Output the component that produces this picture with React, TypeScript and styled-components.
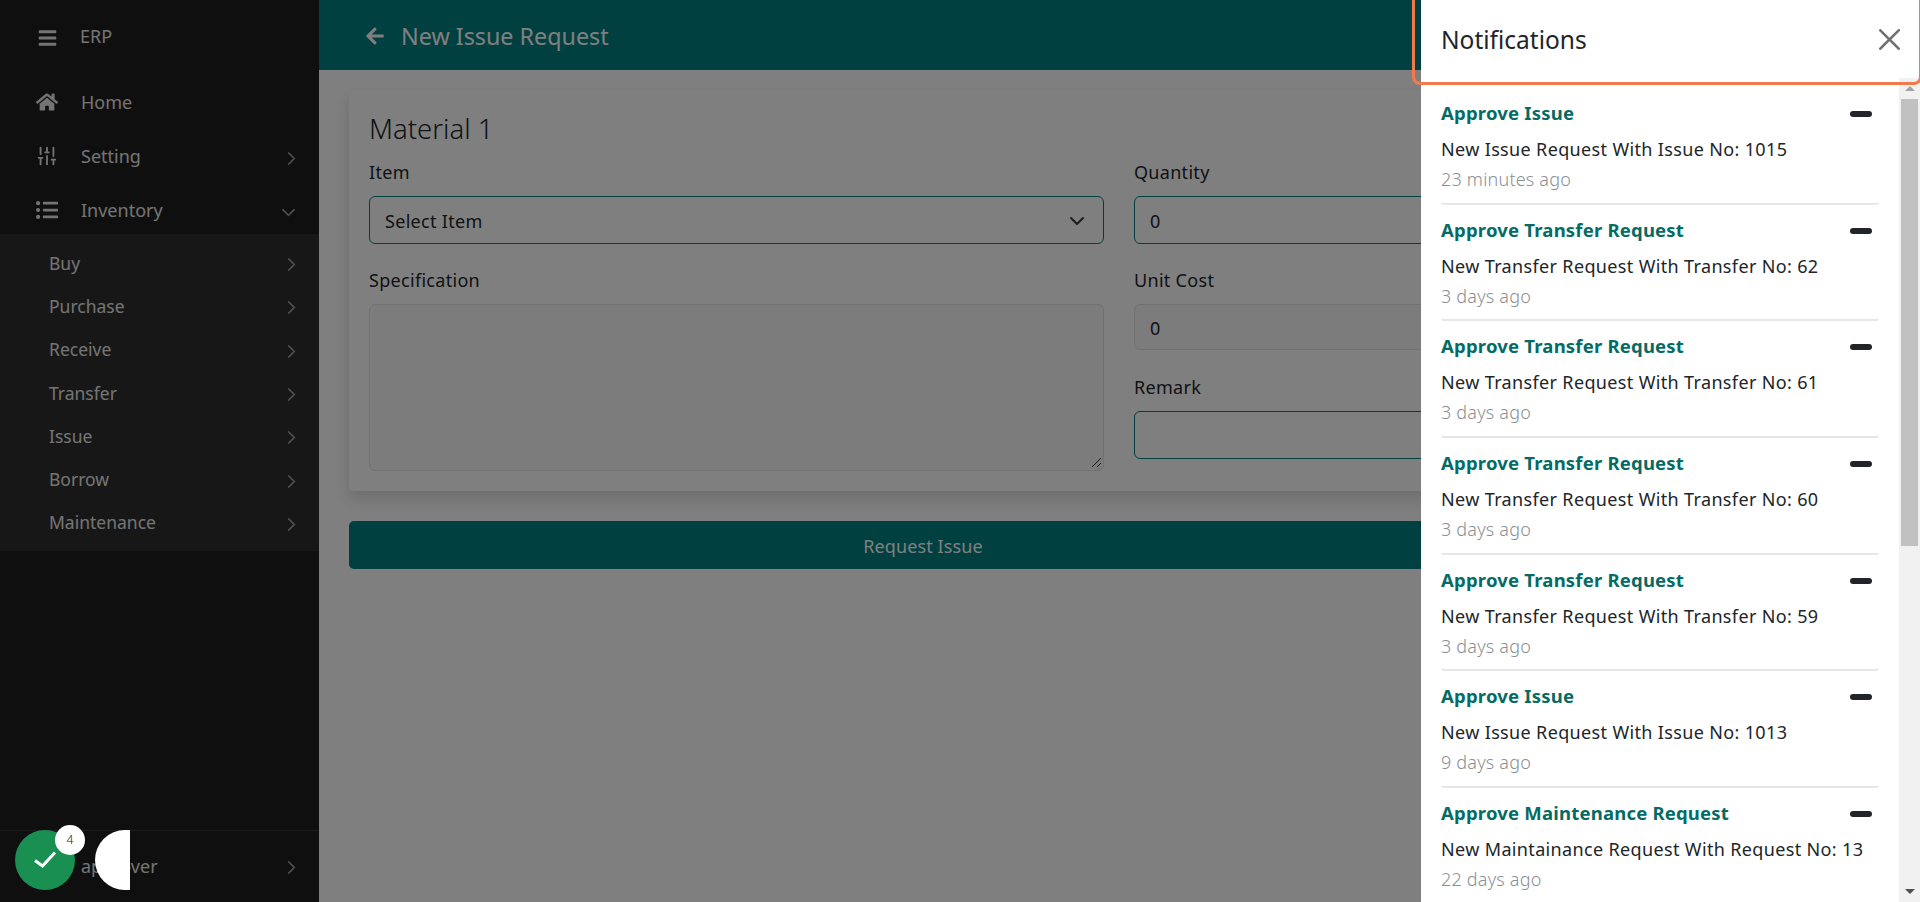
import React from "react";
import styled, { createGlobalStyle } from "styled-components";
import { FaBars, FaHome, FaListUl, FaArrowLeft } from "react-icons/fa";
import { BsChevronRight, BsChevronDown } from "react-icons/bs";
import { SlidersVertical } from "lucide-react";

const Global = createGlobalStyle`
  html, body { margin: 0; padding: 0; height: 100%; overflow: hidden; }
  body { font-family: "Noto Sans", "Open Sans", sans-serif; background: #fff; color: #212529; }
  * { box-sizing: border-box; }
`;

const Page = styled.div`
  display: flex;
  width: 1920px;
  height: 902px;
  overflow: hidden;
`;
const Sidebar = styled.aside`
  width: 319px;
  flex: none;
  display: flex;
  flex-direction: column;
  background: #1f1f1f;
  color: #e8e8e8;
`;
const Brand = styled.div`
  display: flex;
  align-items: center;
  height: 72px;
  padding-left: 38px;
  gap: 23px;
  font-size: 18px;
  svg { width: 19px; height: 20px; margin-top: 3px; }
`;
const Menu = styled.nav`
  flex: 1;
  padding-top: 3px;
`;
const MenuRow = styled.div`
  display: flex;
  align-items: center;
  height: 54px;
  padding: 0 20px 0 36px;
  font-size: 18px;
`;
const MenuIcon = styled.span`
  width: 45px;
  display: flex;
  svg { width: 22px; height: 22px; }
`;
const MenuLabel = styled.span`
  flex: 1;
`;
const Chevron = styled.span<{ $down?: boolean }>`
  display: flex;
  color: #a8a8a8;
  margin-top: 4px;
  margin-right: ${(p) => (p.$down ? 3 : 0)}px;
  svg { width: 15px; height: 15px; stroke: currentColor; stroke-width: 0.8px; }
`;
const SubMenu = styled.div`
  background: #2e2e2e;
  margin-top: -3px;
  padding: 7px 0;
  height: 317px;
`;
const SubRow = styled.div`
  display: flex;
  align-items: center;
  height: 43.3px;
  padding: 0 20px 0 49px;
  font-size: 17.5px;
`;
const SideFooter = styled.div`
  height: 72px;
  border-top: 1px solid #3a3a3a;
  display: flex;
  align-items: center;
  padding: 0 20px 2px 81px;
  font-size: 18px;
`;
const Main = styled.main`
  flex: 1;
  min-width: 0;
  display: flex;
  flex-direction: column;
  background: #fff;
`;
const TopBar = styled.header`
  height: 70px;
  background: #008080;
  color: #fff;
  display: flex;
  align-items: center;
  padding: 1px 0 0 46px;
  gap: 16px;
  font-size: 23.3px;
  svg { width: 20px; height: 20px; }
`;
const Content = styled.div`
  padding: 20px 30px;
  width: 1208px;
`;
const Card = styled.section`
  background: #fff;
  padding: 20px;
  height: 401px;
  box-shadow: 0 8px 16px rgba(0, 0, 0, 0.15);
  border-radius: 4px;
`;
const CardTitle = styled.h3`
  margin: 0 0 12px;
  font-size: 27.5px;
  font-weight: 300;
  line-height: 38px;
`;
const FormGrid = styled.div`
  display: grid;
  grid-template-columns: 735px 1fr;
  column-gap: 30px;
`;
const Column = styled.div`
  display: flex;
  flex-direction: column;
`;
const Label = styled.div<{ $top: number }>`
  font-size: 18px;
  letter-spacing: 0.3px;
  line-height: 24px;
  height: 26px;
  margin-top: ${(p) => p.$top}px;
  margin-bottom: 10px;
`;
const Field = styled.div<{ $active?: boolean; $h: number }>`
  height: ${(p) => p.$h}px;
  border: 1px solid ${(p) => (p.$active ? "#008080" : "#dee2e6")};
  border-radius: 6px;
  background: ${(p) => (p.$active ? "#fff" : "#f8f9fa")};
  display: flex;
  align-items: center;
  justify-content: space-between;
  padding: 1px 18px 0 15px;
  font-size: 18px;
  letter-spacing: 0.3px;
  position: relative;
`;
const Grip = styled.svg`
  position: absolute;
  right: 1px;
  bottom: 2px;
`;
const SubmitButton = styled.button`
  display: block;
  width: 100%;
  height: 48px;
  margin-top: 30px;
  padding: 1px 0 0;
  background: #008080;
  color: #fff;
  border: 0;
  border-radius: 5px;
  font: inherit;
  font-size: 18px;
  letter-spacing: 0.1px;
`;
const Backdrop = styled.div`
  position: fixed;
  inset: 0;
  background: rgba(0, 0, 0, 0.5);
`;
const Drawer = styled.aside`
  position: fixed;
  top: 0;
  right: 0;
  bottom: 0;
  width: 499px;
  background: #fff;
  display: flex;
  flex-direction: column;
`;
const DrawerHead = styled.div`
  height: 78px;
  flex: none;
  display: flex;
  align-items: center;
  justify-content: space-between;
  padding: 0 20px;
  font-size: 24.5px;
`;
const FocusRing = styled.div`
  position: absolute;
  left: -9px;
  right: -2px;
  top: -10px;
  height: 95px;
  border: 3px solid #f07a4b;
  border-radius: 8px;
  pointer-events: none;
`;
const DrawerBody = styled.div`
  flex: 1;
  min-height: 0;
  display: flex;
`;
const List = styled.div`
  flex: 1;
  overflow: hidden;
  padding: 10px 20px 0;
`;
const Note = styled.div`
  height: 116.7px;
  padding-top: 11px;
  border-bottom: 2px solid #e6e6e6;
  border-radius: 3px;
  &:last-child { border-bottom: 0; }
`;
const NoteHead = styled.div`
  display: flex;
  align-items: center;
  justify-content: space-between;
  height: 30px;
  padding-right: 7px;
`;
const NoteTitle = styled.div`
  font-size: 18.5px;
  letter-spacing: 0.2px;
  line-height: 28px;
  margin-bottom: 2px;
  font-weight: 700;
  color: #056b64;
`;
const Dash = styled.span`
  width: 22px;
  height: 6px;
  border-radius: 3px;
  background: #212529;
`;
const NoteText = styled.div`
  font-size: 18px;
  letter-spacing: 0.35px;
  line-height: 26px;
  margin-top: 7px;
`;
const NoteTime = styled.div`
  font-size: 18px;
  letter-spacing: 0.2px;
  line-height: 26px;
  margin-top: 4px;
  color: #8a8f94;
  font-weight: 300;
`;
const ScrollBar = styled.div`
  width: 21px;
  flex: none;
  background: #f1f1f1;
  display: flex;
  flex-direction: column;
`;
const ScrollArrow = styled.div<{ $down?: boolean }>`
  height: 21px;
  flex: none;
  display: flex;
  align-items: center;
  justify-content: center;
  &::before {
    content: "";
    border-left: 5px solid transparent;
    border-right: 5px solid transparent;
    ${(p) => (p.$down ? "border-top: 5px solid #505050;" : "border-bottom: 5px solid #a3a3a3;")}
  }
`;
const ScrollTrack = styled.div`
  flex: 1;
  padding: 0 2px;
`;
const ScrollThumb = styled.div`
  height: 447px;
  background: #c1c1c1;
`;
const Fab = styled.div`
  position: fixed;
  left: 15px;
  top: 830px;
  width: 60px;
  height: 60px;
  border-radius: 50%;
  background: #198f52;
  color: #fff;
  display: flex;
  align-items: center;
  justify-content: center;
`;
const Badge = styled.span`
  position: absolute;
  left: 40px;
  top: -5px;
  width: 30px;
  height: 30px;
  border-radius: 50%;
  background: #fff;
  color: #212529;
  font-size: 12px;
  font-weight: 300;
  padding-bottom: 2px;
  display: flex;
  align-items: center;
  justify-content: center;
`;
const HalfDisc = styled.div`
  position: fixed;
  left: 95px;
  top: 830px;
  width: 35px;
  height: 60px;
  background: #fff;
  border-radius: 30px 0 0 30px;
`;

const subItems = ["Buy", "Purchase", "Receive", "Transfer", "Issue", "Borrow", "Maintenance"];
const notes = [
  ["Approve Issue", "New Issue Request With Issue No: 1015", "23 minutes ago"],
  ["Approve Transfer Request", "New Transfer Request With Transfer No: 62", "3 days ago"],
  ["Approve Transfer Request", "New Transfer Request With Transfer No: 61", "3 days ago"],
  ["Approve Transfer Request", "New Transfer Request With Transfer No: 60", "3 days ago"],
  ["Approve Transfer Request", "New Transfer Request With Transfer No: 59", "3 days ago"],
  ["Approve Issue", "New Issue Request With Issue No: 1013", "9 days ago"],
  ["Approve Maintenance Request", "New Maintainance Request With Request No: 13", "22 days ago"],
];

export default function App() {
  return (
    <Page>
      <Global />
      <Sidebar>
        <Brand><FaBars />ERP</Brand>
        <Menu>
          <MenuRow><MenuIcon><FaHome /></MenuIcon><MenuLabel>Home</MenuLabel></MenuRow>
          <MenuRow><MenuIcon><SlidersVertical /></MenuIcon><MenuLabel>Setting</MenuLabel><Chevron><BsChevronRight /></Chevron></MenuRow>
          <MenuRow><MenuIcon><FaListUl /></MenuIcon><MenuLabel>Inventory</MenuLabel><Chevron $down><BsChevronDown /></Chevron></MenuRow>
          <SubMenu>
            {subItems.map((s) => (
              <SubRow key={s}><MenuLabel>{s}</MenuLabel><Chevron><BsChevronRight /></Chevron></SubRow>
            ))}
          </SubMenu>
        </Menu>
        <SideFooter><MenuLabel>approver</MenuLabel><Chevron><BsChevronRight /></Chevron></SideFooter>
      </Sidebar>
      <Main>
        <TopBar><FaArrowLeft />New Issue Request</TopBar>
        <Content>
          <Card>
            <CardTitle>Material 1</CardTitle>
            <FormGrid>
              <Column>
                <Label $top={0}>Item</Label>
                <Field $active $h={48}>
                  Select Item
                  <svg width="16" height="16" viewBox="0 0 16 16" fill="none" stroke="#343a40" strokeWidth="2" strokeLinecap="round" strokeLinejoin="round"><path d="m2 5 6 6 6-6" /></svg>
                </Field>
                <Label $top={24}>Specification</Label>
                <Field $h={167}>
                  <Grip width="12" height="12" viewBox="0 0 12 12"><path d="M2 11 11 2M7 11l4-4" stroke="#333" fill="none" /></Grip>
                </Field>
              </Column>
              <Column>
                <Label $top={0}>Quantity</Label>
                <Field $active $h={48}>0</Field>
                <Label $top={24}>Unit Cost</Label>
                <Field $h={46}>0</Field>
                <Label $top={25}>Remark</Label>
                <Field $active $h={48} />
              </Column>
            </FormGrid>
          </Card>
          <SubmitButton>Request Issue</SubmitButton>
        </Content>
      </Main>
      <Backdrop />
      <Drawer>
        <DrawerHead>
          Notifications
          <svg width="21" height="21" viewBox="0 0 16 16" fill="#707070"><path d="M.293.293a1 1 0 0 1 1.414 0L8 6.586 14.293.293a1 1 0 1 1 1.414 1.414L9.414 8l6.293 6.293a1 1 0 0 1-1.414 1.414L8 9.414l-6.293 6.293a1 1 0 0 1-1.414-1.414L6.586 8 .293 1.707a1 1 0 0 1 0-1.414z" /></svg>
        </DrawerHead>
        <DrawerBody>
          <List>
            {notes.map((n, i) => (
              <Note key={i}>
                <NoteHead><NoteTitle>{n[0]}</NoteTitle><Dash /></NoteHead>
                <NoteText>{n[1]}</NoteText>
                <NoteTime>{n[2]}</NoteTime>
              </Note>
            ))}
          </List>
          <ScrollBar>
            <ScrollArrow />
            <ScrollTrack><ScrollThumb /></ScrollTrack>
            <ScrollArrow $down />
          </ScrollBar>
        </DrawerBody>
        <FocusRing />
      </Drawer>
      <Fab>
        <svg width="24" height="20" viewBox="0 0 24 20" fill="none" stroke="#fff" strokeWidth="3"><path d="M2 10.5 9.5 16 22 2.5" /></svg>
        <Badge>4</Badge>
      </Fab>
      <HalfDisc />
    </Page>
  );
}
